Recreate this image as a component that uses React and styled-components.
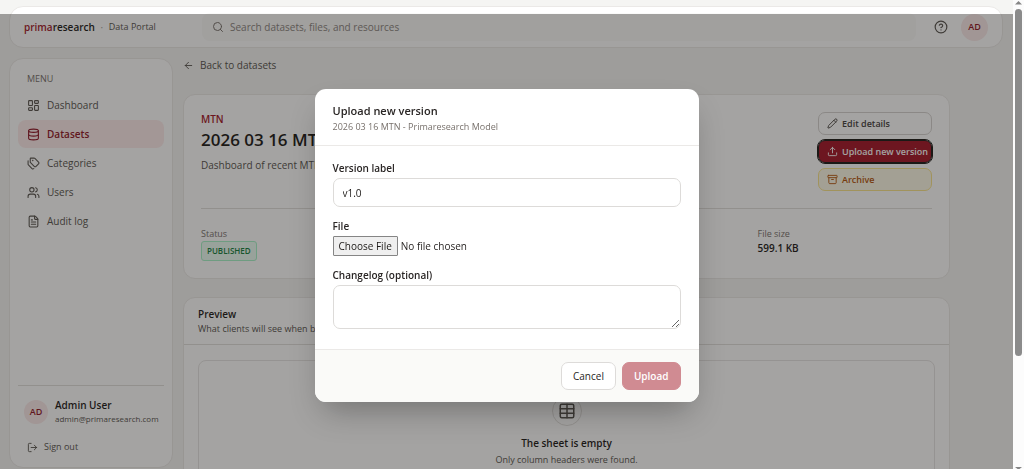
import React from "react";
import styled, { createGlobalStyle, css } from "styled-components";
import {
  LayoutDashboard, Database, Tags, Users, FileText, LogOut, ArrowLeft,
  Search, CircleHelp, Pencil, Upload, Archive, Table,
} from "lucide-react";

const Global = createGlobalStyle`
  *, *::before, *::after { box-sizing: border-box; }
  body {
    margin: 0;
    background: #f5f5f3;
    color: #1c1917;
    font: 10px/16px "Open Sans", "Noto Sans", sans-serif;
    overflow: hidden;
  }
  button, input, textarea { font: inherit; color: inherit; }
  h1, h2, h3, p, dl, dd, ul { margin: 0; padding: 0; }
  svg { flex: none; display: block; }
`;

const Window = styled.div`
  display: grid;
  grid-template-columns: 1fr 11px;
  height: 100vh;
  overflow: hidden;
`;

const Page = styled.div`
  display: flex;
  flex-direction: column;
  gap: 10px;
  min-height: 0;
  min-width: 0;
  padding: 6px 10px 0 9px;
`;

const panel = css`
  background: #fff;
  border: 1px solid #ebe9e7;
`;

const TopBar = styled.header`
  ${panel}
  display: flex;
  align-items: center;
  flex: none;
  height: 42px;
  border-radius: 14px;
  padding: 0 14px;
`;

const Brand = styled.a`
  display: flex;
  align-items: center;
  width: 178px;
  color: #1c1917;
  font-weight: 600;
  text-decoration: none;
`;

const BrandAccent = styled.span`
  color: #a31527;
`;

const Dot = styled.span`
  width: 14px;
  text-align: center;
  font-weight: 400;
  color: #a8a29e;
`;

const Product = styled.span`
  font-size: 9px;
  font-weight: 400;
  color: #57534e;
`;

const SearchBox = styled.label`
  display: flex;
  align-items: center;
  gap: 6px;
  flex: 1;
  height: 28px;
  padding: 0 10px;
  border-radius: 8px;
  background: #fafaf9;
  color: #78716c;
`;

const SearchInput = styled.input`
  flex: 1;
  min-width: 0;
  border: 0;
  padding: 0;
  background: none;
  outline: 0;
  &::placeholder { color: #8a847f; opacity: 1; }
`;

const IconButton = styled.button`
  display: grid;
  place-items: center;
  width: 28px;
  height: 28px;
  margin: 0 6px 0 11px;
  padding: 0;
  border: 0;
  background: none;
  color: #57534e;
`;

const Avatar = styled.span`
  display: grid;
  place-items: center;
  flex: none;
  width: ${(p) => p.$size}px;
  height: ${(p) => p.$size}px;
  border-radius: 50%;
  background: #fbe9e9;
  color: #8f1425;
  font-size: 9px;
  font-weight: 600;
`;

const Columns = styled.div`
  display: flex;
  gap: 10px;
  flex: 1;
  min-height: 0;
`;

const Sidebar = styled.aside`
  ${panel}
  display: flex;
  flex-direction: column;
  flex: none;
  width: 164px;
  margin-bottom: 1px;
  padding: 12px 8px 9px;
  border-radius: 14px;
`;

const MenuTitle = styled.p`
  padding: 0 9px;
  margin-bottom: 4px;
  font-size: 9px;
  color: #78716c;
`;

const NavLink = styled.a`
  display: flex;
  align-items: center;
  gap: 7px;
  height: 28px;
  margin-bottom: 1px;
  padding: 0 9px;
  border-radius: 8px;
  text-decoration: none;
  color: ${(p) => (p.$active ? "#8f1425" : "#57534e")};
  background: ${(p) => (p.$active ? "#fdebeb" : "none")};
  font-weight: ${(p) => (p.$active ? 600 : 400)};
`;

const Account = styled.div`
  margin-top: auto;
  padding: 13px 6px 0;
  border-top: 1px solid #e2e0dd;
`;

const Person = styled.div`
  display: flex;
  align-items: center;
  gap: 7px;
`;

const PersonName = styled.p`
  font-size: 10px;
  line-height: 13px;
  font-weight: 600;
`;

const PersonMail = styled.p`
  font-size: 8px;
  line-height: 13px;
  color: #57534e;
`;

const SignOut = styled.button`
  display: flex;
  align-items: center;
  gap: 6px;
  margin-top: 11px;
  padding: 3px;
  border: 0;
  background: none;
  font-size: 9px;
  color: #57534e;
`;

const Main = styled.main`
  flex: 1;
  min-width: 0;
  max-width: 767px;
`;

const BackLink = styled.a`
  display: flex;
  align-items: center;
  gap: 6px;
  height: 14px;
  margin-bottom: 22px;
  text-decoration: none;
  color: #57534e;
`;

const Card = styled.section`
  ${panel}
  border-radius: 12px;
  margin-bottom: 18px;
`;

const Summary = styled.div`
  display: flex;
  justify-content: space-between;
  margin: 0 17px;
  padding: 17px 0;
  border-bottom: 1px solid #e2e0dd;
`;

const Category = styled.p`
  font-size: 10px;
  line-height: 14px;
  font-weight: 600;
  color: #a31527;
`;

const Title = styled.h1`
  font-size: 17px;
  line-height: 28px;
  font-weight: 600;
  white-space: nowrap;
`;

const Description = styled.p`
  margin-top: 3px;
  color: #57534e;
`;

const Actions = styled.div`
  display: flex;
  flex-direction: column;
  gap: 5px;
  flex: none;
  width: 114px;
`;

const tones = {
  plain: css`
    background: #fff;
    border-color: #d6d3d1;
    color: #44403c;
  `,
  primary: css`
    background: #a31527;
    border-color: #1c1917;
    outline: 1px solid #1c1917;
    color: #fff;
  `,
  warning: css`
    background: #fefbe8;
    border-color: #fbe58a;
    color: #b4540a;
  `,
};

const ActionButton = styled.button`
  display: flex;
  align-items: center;
  gap: 4px;
  height: 23px;
  padding: 0 8px;
  border: 1px solid;
  border-radius: 7px;
  font-size: 9px;
  font-weight: 600;
  white-space: nowrap;
  ${(p) => tones[p.$tone]}
`;

const Stats = styled.dl`
  display: grid;
  grid-template-columns: repeat(4, 1fr);
  gap: 11px;
  padding: 17px;
`;

const StatLabel = styled.dt`
  font-size: 9px;
  line-height: 15px;
  color: #78716c;
`;

const StatValue = styled.dd`
  font-size: 10px;
  line-height: 14px;
  font-weight: 600;
`;

const Badge = styled.span`
  display: inline-block;
  height: 20px;
  padding: 0 5px;
  border: 1px solid #a7f3c8;
  border-radius: 3px;
  background: #ecfdf3;
  color: #15803d;
  font-size: 8px;
  line-height: 18px;
`;

const PreviewHead = styled.div`
  height: 47px;
  padding: 8px 14px 0;
  border-bottom: 1px solid #e2e0dd;
`;

const SectionTitle = styled.h2`
  font-size: 10px;
  line-height: 16px;
  font-weight: 600;
`;

const Hint = styled.p`
  font-size: 9px;
  line-height: 14px;
  color: ${(p) => (p.$soft ? "#78716c" : "#57534e")};
`;

const EmptyState = styled.div`
  display: flex;
  flex-direction: column;
  align-items: center;
  margin: 15px 14px;
  padding: 35px 14px;
  border: 1px solid #e7e5e4;
  border-radius: 8px;
`;

const EmptyIcon = styled.span`
  display: grid;
  place-items: center;
  width: 30px;
  height: 30px;
  margin-bottom: 9px;
  border: 1px solid #e2e0dd;
  border-radius: 50%;
  color: #57534e;
`;

const EmptyTitle = styled.h3`
  margin-bottom: 2px;
  font-size: 10px;
  line-height: 16px;
  font-weight: 600;
`;

const ScrollBar = styled.div`
  display: flex;
  flex-direction: column;
  align-items: center;
  justify-content: space-between;
  background: #fcfcfc;
  color: #858585;
`;

const ScrollThumb = styled.div`
  width: 7px;
  height: 74%;
  margin: 4px 0 auto;
  border-radius: 4px;
  background: #8b8b8b;
`;

const Overlay = styled.div`
  position: fixed;
  inset: 14px 11px 0 0;
  display: flex;
  justify-content: center;
  align-items: center;
  padding-top: 8px;
  background: rgba(28, 25, 23, 0.4);
`;

const Dialog = styled.form`
  width: 384px;
  border-radius: 11px;
  overflow: hidden;
  background: #fff;
  box-shadow: 0 16px 32px -8px rgba(0, 0, 0, 0.3);
`;

const DialogHead = styled.div`
  padding: 13px 18px 11px;
  border-bottom: 1px solid #ebe9e7;
`;

const DialogTitle = styled.h2`
  margin-bottom: 1px;
  font-size: 11px;
  line-height: 17px;
  font-weight: 600;
  color: #292524;
`;

const DialogBody = styled.div`
  display: flex;
  flex-direction: column;
  gap: 11px;
  padding: 14px 18px 20px;
`;

const Field = styled.div`
  display: flex;
  flex-direction: column;
  gap: 2px;
`;

const Label = styled.label`
  font-size: 10px;
  line-height: 16px;
  font-weight: 600;
  color: #292524;
`;

const fieldBox = css`
  width: 100%;
  border: 1px solid #dddbd9;
  border-radius: 7px;
  background: #fff;
  outline: 0;
`;

const TextInput = styled.input`
  ${fieldBox}
  height: 29px;
  padding: 0 9px;
`;

const TextArea = styled.textarea`
  ${fieldBox}
  display: block;
  height: 44px;
  padding: 5px 9px;
  resize: vertical;
`;

const FileInput = styled.input`
  height: 20px;
  color: #292524;
  &::file-selector-button {
    height: 20px;
    margin: 0 3px 0 0;
    padding: 0 5px;
    border: 1px solid #858585;
    border-radius: 1px;
    background: #efefef;
    font: inherit;
    color: #1c1917;
  }
`;

const DialogFoot = styled.div`
  display: flex;
  justify-content: flex-end;
  gap: 6px;
  padding: 12px 18px;
  border-top: 1px solid #ebe9e7;
  background: #fafaf8;
`;

const FootButton = styled.button`
  height: 28px;
  padding: 0 11px;
  border: 1px solid ${(p) => (p.$primary ? "#d08b92" : "#dddbd9")};
  border-radius: 7px;
  background: ${(p) => (p.$primary ? "#d08b92" : "#fff")};
  color: ${(p) => (p.$primary ? "#fff" : "#292524")};
  font-weight: ${(p) => (p.$primary ? 600 : 400)};
`;

const NAV = [
  { label: "Dashboard", icon: LayoutDashboard },
  { label: "Datasets", icon: Database, active: true },
  { label: "Categories", icon: Tags },
  { label: "Users", icon: Users },
  { label: "Audit log", icon: FileText },
];

export default function App() {
  return (
    <>
      <Global />
      <Window>
        <Page>
          <TopBar>
            <Brand href="#">
              <BrandAccent>prima</BrandAccent>research<Dot>·</Dot>
              <Product>Data Portal</Product>
            </Brand>
            <SearchBox>
              <Search size={12} />
              <SearchInput type="text" aria-label="Search" placeholder="Search datasets, files, and resources" />
            </SearchBox>
            <IconButton type="button" aria-label="Help"><CircleHelp size={14} /></IconButton>
            <Avatar $size={27}>AD</Avatar>
          </TopBar>
          <Columns>
            <Sidebar>
              <MenuTitle>MENU</MenuTitle>
              <nav>
                {NAV.map(({ label, icon: Icon, active }) => (
                  <NavLink key={label} href="#" $active={active}>
                    <Icon size={13} />
                    {label}
                  </NavLink>
                ))}
              </nav>
              <Account>
                <Person>
                  <Avatar $size={24}>AD</Avatar>
                  <div>
                    <PersonName>Admin User</PersonName>
                    <PersonMail>admin@primaresearch.com</PersonMail>
                  </div>
                </Person>
                <SignOut type="button"><LogOut size={11} />Sign out</SignOut>
              </Account>
            </Sidebar>
            <Main>
              <BackLink href="#"><ArrowLeft size={11} />Back to datasets</BackLink>
              <Card>
                <Summary>
                  <div>
                    <Category>MTN</Category>
                    <Title>2026 03 16 MTN - Primaresearch Model</Title>
                    <Description>Dashboard of recent MTN data</Description>
                  </div>
                  <Actions>
                    <ActionButton type="button" $tone="plain"><Pencil size={11} />Edit details</ActionButton>
                    <ActionButton type="button" $tone="primary"><Upload size={11} />Upload new version</ActionButton>
                    <ActionButton type="button" $tone="warning"><Archive size={11} />Archive</ActionButton>
                  </Actions>
                </Summary>
                <Stats>
                  <div><StatLabel>Status</StatLabel><StatValue><Badge>PUBLISHED</Badge></StatValue></div>
                  <div><StatLabel>Version</StatLabel><StatValue>v1.0</StatValue></div>
                  <div><StatLabel>Category</StatLabel><StatValue>MTN</StatValue></div>
                  <div><StatLabel>File size</StatLabel><StatValue>599.1 KB</StatValue></div>
                </Stats>
              </Card>
              <Card>
                <PreviewHead>
                  <SectionTitle>Preview</SectionTitle>
                  <Hint>What clients will see when browsing this dataset</Hint>
                </PreviewHead>
                <EmptyState>
                  <EmptyIcon><Table size={18} /></EmptyIcon>
                  <EmptyTitle>The sheet is empty</EmptyTitle>
                  <Hint>Only column headers were found.</Hint>
                </EmptyState>
              </Card>
            </Main>
          </Columns>
        </Page>
        <ScrollBar aria-hidden="true">
          <svg width="7" height="5" viewBox="0 0 7 5"><path d="M0 4.5 3.5 1 7 4.5z" fill="currentColor" /></svg>
          <ScrollThumb />
          <svg width="7" height="3" viewBox="0 0 7 3"><path d="M0 1h7L4.5 3h-2z" fill="currentColor" /></svg>
        </ScrollBar>
      </Window>
      <Overlay>
        <Dialog role="dialog" aria-labelledby="dialog-title" onSubmit={(e) => e.preventDefault()}>
          <DialogHead>
            <DialogTitle id="dialog-title">Upload new version</DialogTitle>
            <Hint $soft>2026 03 16 MTN - Primaresearch Model</Hint>
          </DialogHead>
          <DialogBody>
            <Field>
              <Label htmlFor="version">Version label</Label>
              <TextInput id="version" type="text" defaultValue="v1.0" />
            </Field>
            <Field>
              <Label htmlFor="file">File</Label>
              <FileInput id="file" type="file" />
            </Field>
            <Field>
              <Label htmlFor="changelog">Changelog (optional)</Label>
              <TextArea id="changelog" />
            </Field>
          </DialogBody>
          <DialogFoot>
            <FootButton type="button">Cancel</FootButton>
            <FootButton type="submit" $primary>Upload</FootButton>
          </DialogFoot>
        </Dialog>
      </Overlay>
    </>
  );
}
